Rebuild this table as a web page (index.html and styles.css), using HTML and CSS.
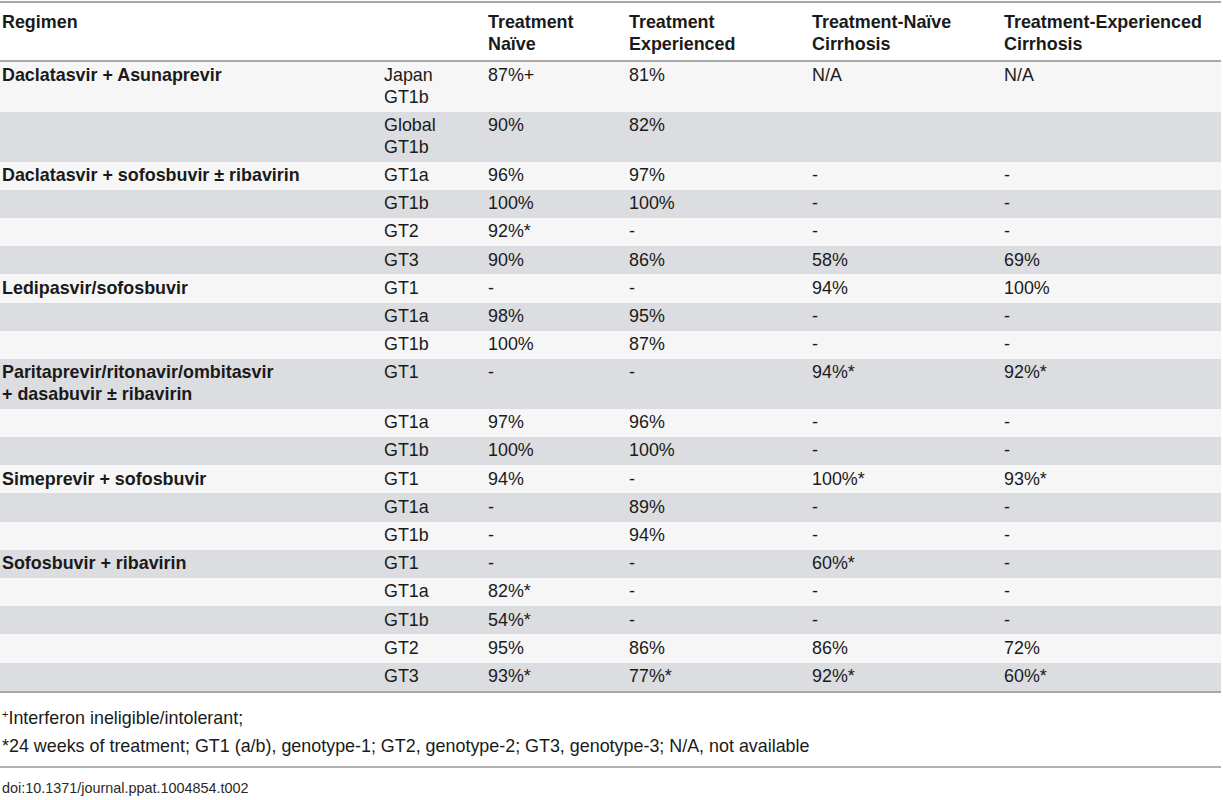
FILE: index.html
```html
<!DOCTYPE html>
<html lang="en">
<head>
    <meta charset="UTF-8">
    <meta name="viewport" content="width=device-width, initial-scale=1.0">
    <title>SVR rates of interferon-free regimens</title>
    <link rel="stylesheet" href="styles.css">
</head>
<body>

<div class="table-wrap">
    <table class="svr-table">
        <colgroup>
            <col class="c-regimen">
            <col class="c-geno">
            <col class="c-naive">
            <col class="c-exp">
            <col class="c-naive-cir">
            <col class="c-exp-cir">
        </colgroup>
        <thead>
            <tr>
                <th>Regimen</th>
                <th></th>
                <th>Treatment<br>Naïve</th>
                <th>Treatment<br>Experienced</th>
                <th>Treatment-Naïve<br>Cirrhosis</th>
                <th>Treatment-Experienced<br>Cirrhosis</th>
            </tr>
        </thead>
        <tbody>
            <tr class="tall"><td class="regimen">Daclatasvir + Asunaprevir</td><td>Japan<br>GT1b</td><td>87%+</td><td>81%</td><td>N/A</td><td>N/A</td></tr>
            <tr class="tall"><td></td><td>Global<br>GT1b</td><td>90%</td><td>82%</td><td></td><td></td></tr>
            <tr><td class="regimen">Daclatasvir + sofosbuvir ± ribavirin</td><td>GT1a</td><td>96%</td><td>97%</td><td>-</td><td>-</td></tr>
            <tr><td></td><td>GT1b</td><td>100%</td><td>100%</td><td>-</td><td>-</td></tr>
            <tr><td></td><td>GT2</td><td>92%*</td><td>-</td><td>-</td><td>-</td></tr>
            <tr><td></td><td>GT3</td><td>90%</td><td>86%</td><td>58%</td><td>69%</td></tr>
            <tr><td class="regimen">Ledipasvir/sofosbuvir</td><td>GT1</td><td>-</td><td>-</td><td>94%</td><td>100%</td></tr>
            <tr><td></td><td>GT1a</td><td>98%</td><td>95%</td><td>-</td><td>-</td></tr>
            <tr><td></td><td>GT1b</td><td>100%</td><td>87%</td><td>-</td><td>-</td></tr>
            <tr class="tall"><td class="regimen">Paritaprevir/ritonavir/ombitasvir<br>+ dasabuvir ± ribavirin</td><td>GT1</td><td>-</td><td>-</td><td>94%*</td><td>92%*</td></tr>
            <tr><td></td><td>GT1a</td><td>97%</td><td>96%</td><td>-</td><td>-</td></tr>
            <tr><td></td><td>GT1b</td><td>100%</td><td>100%</td><td>-</td><td>-</td></tr>
            <tr><td class="regimen">Simeprevir + sofosbuvir</td><td>GT1</td><td>94%</td><td>-</td><td>100%*</td><td>93%*</td></tr>
            <tr><td></td><td>GT1a</td><td>-</td><td>89%</td><td>-</td><td>-</td></tr>
            <tr><td></td><td>GT1b</td><td>-</td><td>94%</td><td>-</td><td>-</td></tr>
            <tr><td class="regimen">Sofosbuvir + ribavirin</td><td>GT1</td><td>-</td><td>-</td><td>60%*</td><td>-</td></tr>
            <tr><td></td><td>GT1a</td><td>82%*</td><td>-</td><td>-</td><td>-</td></tr>
            <tr><td></td><td>GT1b</td><td>54%*</td><td>-</td><td>-</td><td>-</td></tr>
            <tr><td></td><td>GT2</td><td>95%</td><td>86%</td><td>86%</td><td>72%</td></tr>
            <tr><td></td><td>GT3</td><td>93%*</td><td>77%*</td><td>92%*</td><td>60%*</td></tr>
        </tbody>
    </table>
</div>

<div class="notes">
    <p><sup>+</sup>Interferon ineligible/intolerant;</p>
    <p>*24 weeks of treatment; GT1 (a/b), genotype-1; GT2, genotype-2; GT3, genotype-3; N/A, not available</p>
</div>

<div class="doi">doi:10.1371/journal.ppat.1004854.t002</div>

</body>
</html>
```

FILE: styles.css
```css
body {
    font-family: "Liberation Sans", Arial, sans-serif;
    margin: 0;
    padding: 1px 2px 0 0;
    background-color: white;
    color: #1a1a1a;
}
.svr-table {
    width: 1221px;
    border-collapse: collapse;
    table-layout: fixed;
    font-size: 17.9px;
    line-height: 21.8px;
    border-top: 2px solid #a8a8a8;
    border-bottom: 2px solid #a8a8a8;
}
.c-regimen { width: 382px; }
.c-geno { width: 104px; }
.c-naive { width: 141px; }
.c-exp { width: 183px; }
.c-naive-cir { width: 192px; }
.c-exp-cir { width: 219px; }
th, td {
    text-align: left;
    vertical-align: top;
    padding: 3.4px 2px 3px 2px;
}
th {
    font-weight: bold;
    padding-top: 9px;
    padding-bottom: 4px;
    border-bottom: 2px solid #a8a8a8;
}
td.regimen {
    font-weight: bold;
}
tbody tr:nth-child(odd) {
    background-color: #f6f6f6;
}
tbody tr:nth-child(even) {
    background-color: #dcdde0;
}
.notes {
    font-size: 17.9px;
    line-height: 28.5px;
    padding: 11px 0 5px 2px;
    border-bottom: 2px solid #b0b0b0;
    width: 1219px;
}
.notes p {
    margin: 0;
}
.notes sup {
    font-size: 11px;
    vertical-align: 6px;
    line-height: 0;
}
.doi {
    font-size: 14.4px;
    padding: 12px 0 0 2px;
    color: #2a2a2a;
}
```
